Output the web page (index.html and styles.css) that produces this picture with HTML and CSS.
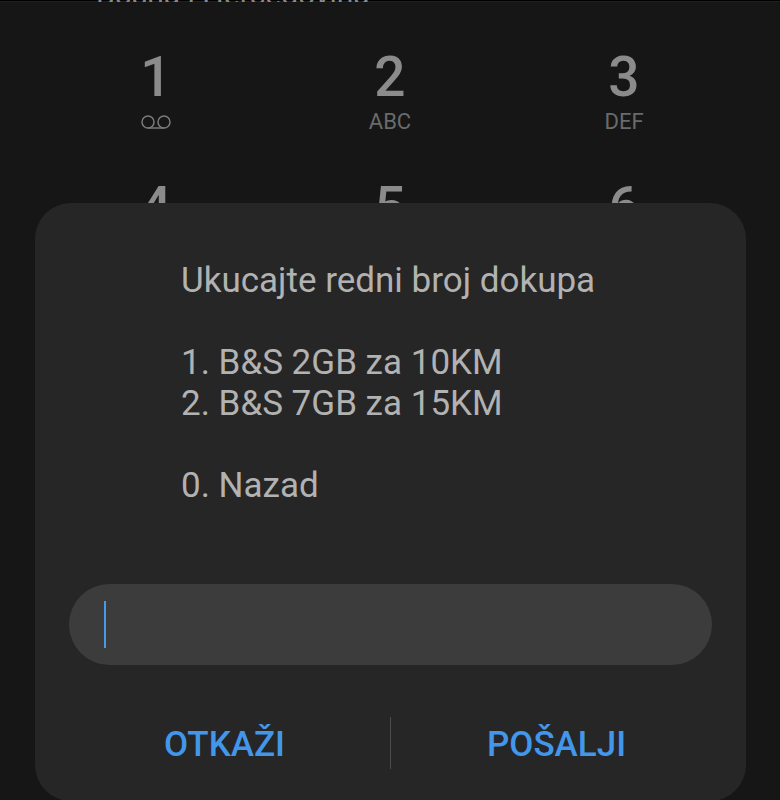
FILE: index.html
```html
<!DOCTYPE html>
<html lang="bs">
<head>
  <meta charset="UTF-8" />
  <meta name="viewport" content="width=device-width, initial-scale=1" />
  <title>Telefon</title>
  <link rel="stylesheet" href="styles.css">
</head>
<body>

<main class="dialer">
  <div class="region">
    <span class="region-name">Bosna i Hercegovina</span>
  </div>

  <div class="keypad">
    <button class="key" aria-label="1">
      <span class="digit">1</span>
      <svg class="voicemail" viewBox="0 0 30 16" aria-hidden="true">
        <circle cx="7" cy="7" r="6" />
        <circle cx="23" cy="7" r="6" />
        <path d="M7 13H23" />
      </svg>
    </button>
    <button class="key">
      <span class="digit">2</span>
      <span class="letters">ABC</span>
    </button>
    <button class="key">
      <span class="digit">3</span>
      <span class="letters">DEF</span>
    </button>
    <button class="key"><span class="digit">4</span></button>
    <button class="key"><span class="digit">5</span></button>
    <button class="key"><span class="digit">6</span></button>
  </div>
</main>

<form class="dialog" role="dialog" aria-labelledby="message">
  <label class="message" id="message" for="reply">Ukucajte redni broj dokupa

1. B&amp;S 2GB za 10KM
2. B&amp;S 7GB za 15KM

0. Nazad</label>

  <div class="field">
    <span class="caret"></span>
    <input class="reply" id="reply" type="text" autocomplete="off" />
  </div>

  <div class="actions">
    <button class="action" type="button">OTKAŽI</button>
    <span class="divider"></span>
    <button class="action" type="submit">POŠALJI</button>
  </div>
</form>

</body>
</html>
```
FILE: styles.css
```css
* {
  box-sizing: border-box;
}

body {
  margin: 0;
  height: 100vh;
  overflow: hidden;
  position: relative;
  background: #161616;
  font-family: Roboto, "Liberation Sans", sans-serif;
}

button {
  padding: 0;
  border: none;
  background: none;
  font-family: inherit;
  cursor: pointer;
}

/* bottom edge of the line scrolled off the top */
.region {
  display: flex;
  align-items: flex-end;
  height: 2px;
  padding: 0 96px;
  overflow: hidden;
  background: linear-gradient(#000 50%, #202020 50%);
}

.region-name {
  font-size: 30px;
  line-height: 14px;
  color: #8b8b8b;
}

.keypad {
  display: grid;
  grid-template-columns: repeat(3, 1fr);
  padding: 43px 39px 0;
}

.key {
  display: flex;
  flex-direction: column;
  align-items: center;
  height: 130px;
}

.digit {
  font-size: 55px;
  font-weight: 500;
  line-height: 64px;
  color: #8b8b8b;
}

.letters {
  font-size: 22px;
  line-height: 26px;
  color: #6a6a6a;
}

.voicemail {
  width: 30px;
  height: 16px;
  margin-top: 6px;
  fill: none;
  stroke: #7a7a7a;
  stroke-width: 1.5;
}

/* dialog lies over the keypad */
.dialog {
  position: absolute;
  top: 203px;
  left: 35px;
  right: 34px;
  padding: 57px 24px 20px;
  border-radius: 36px;
  background: #262626;
}

.message {
  display: block;
  padding: 0 122px;
  font-size: 35px;
  line-height: 41px;
  white-space: pre-wrap;
  color: #b2b2b2;
}

.field {
  display: flex;
  align-items: center;
  height: 81px;
  margin: 78px 10px 0;
  padding: 0 35px;
  border-radius: 41px;
  background: #3c3c3c;
}

.caret {
  width: 2px;
  height: 47px;
  background: #4a98e8;
}

.reply {
  flex: 1;
  min-width: 0;
  height: 100%;
  padding: 0;
  border: none;
  outline: none;
  background: none;
  font: inherit;
  font-size: 35px;
  color: #b2b2b2;
}

.actions {
  display: flex;
  align-items: center;
  margin-top: 40px;
}

.action {
  flex: 1;
  height: 76px;
  padding-top: 2px;
  font-size: 35px;
  font-weight: 500;
  color: #4297ea;
}

.divider {
  width: 1px;
  height: 52px;
  background: #4c4c4c;
}
```
